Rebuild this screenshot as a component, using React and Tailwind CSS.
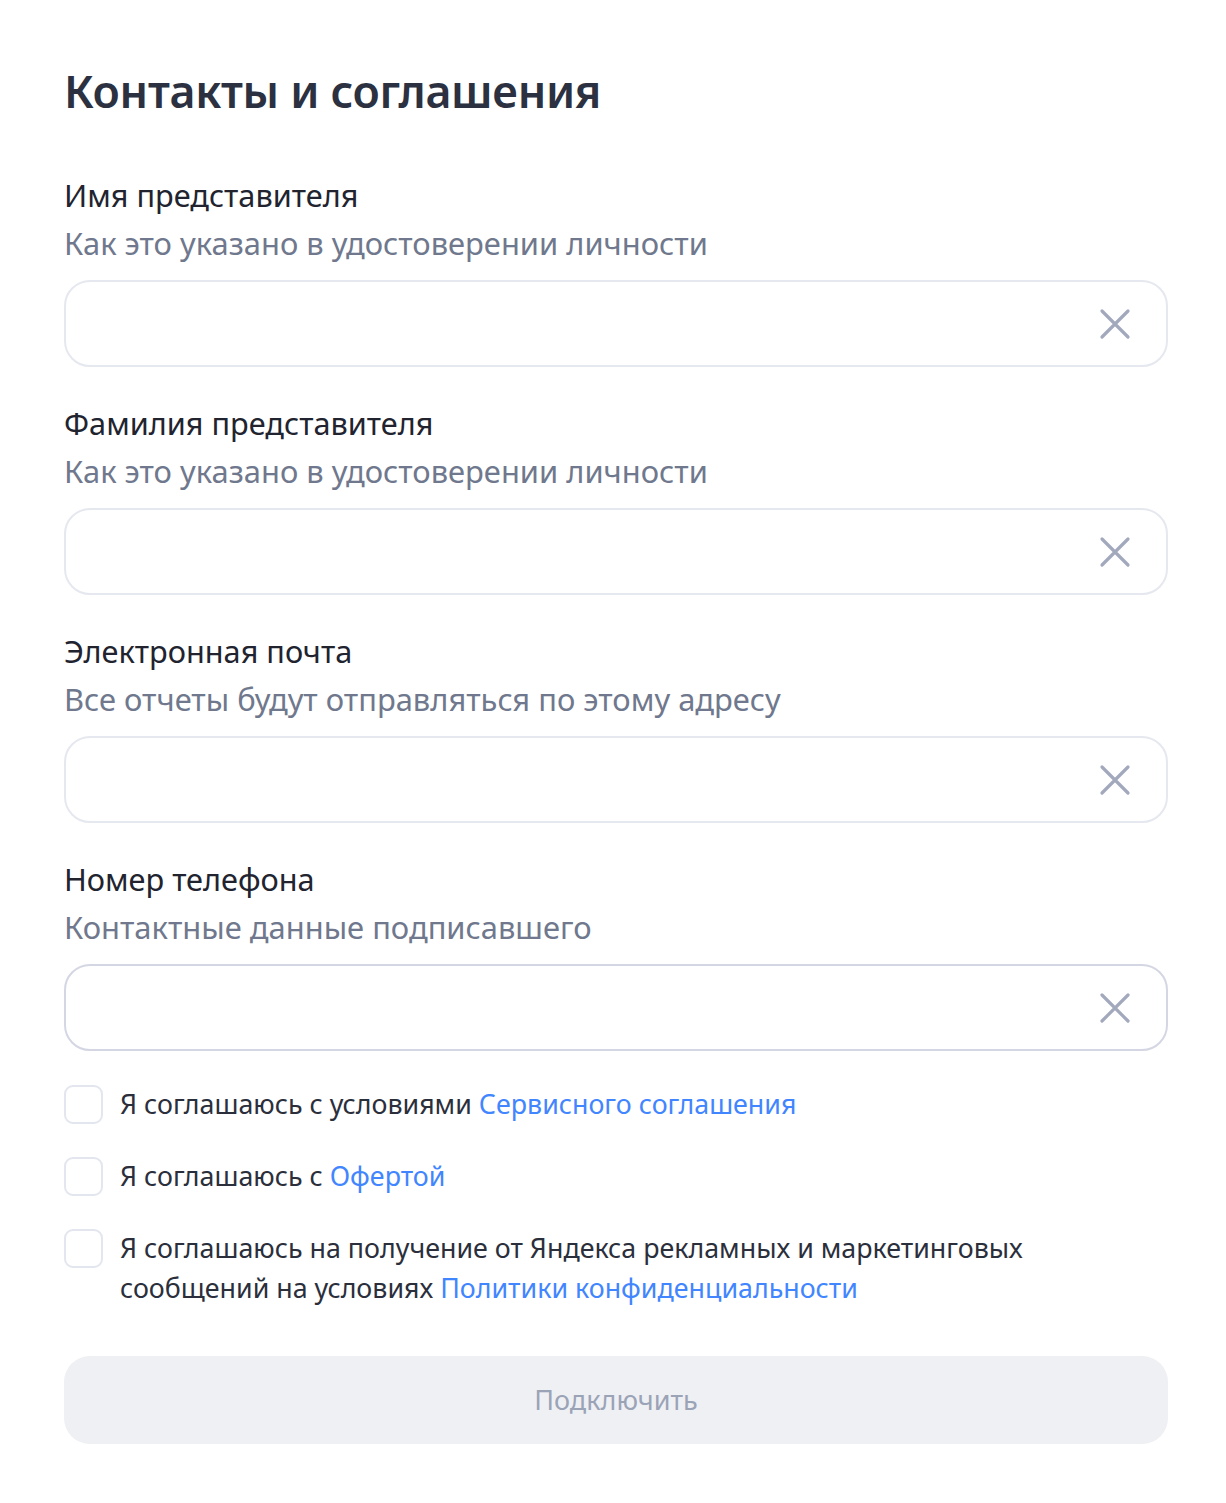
import React from "react";

function ClearIcon() {
  return (
    <svg width="34" height="34" viewBox="0 0 34 34" fill="none">
      <path d="M4 4L30 30M30 4L4 30" stroke="#a3a9bd" strokeWidth="3.2" strokeLinecap="round" />
    </svg>
  );
}

function Field({ label, hint, strong }) {
  return (
    <div className="flex flex-col">
      <div className="text-[30.7px] leading-[48px] text-[#21242f]">{label}</div>
      <div className="text-[30.9px] leading-[48px] text-[#6f788d]">{hint}</div>
      <div
        className={
          "mt-[13px] h-[87px] rounded-[26px] border-2 flex items-center justify-end pr-[34px] " +
          (strong ? "border-[#d4d7e3]" : "border-[#e6e8ef]")
        }
      >
        <ClearIcon />
      </div>
    </div>
  );
}

function Check({ children }) {
  return (
    <div className="flex items-start gap-[17px]">
      <div className="mt-[1px] w-[39px] h-[39px] shrink-0 rounded-[9px] border-2 border-[#e3e6ee] bg-white" />
      <div className="text-[26.8px] leading-[40px] text-[#2b2f3c]">{children}</div>
    </div>
  );
}

export default function App() {
  return (
    <div
      className="min-h-[1503px] bg-white"
      style={{ fontFamily: '"Noto Sans", "Open Sans", sans-serif' }}
    >
      <div className="px-[64px] pt-[63px] pb-[60px] w-[1232px]">
        <h1 className="text-[44.7px] leading-[56px] font-semibold text-[#2b3140] tracking-[-0.3px]">
          Контакты и соглашения
        </h1>
        <div className="mt-[52px] flex flex-col gap-[32px]">
          <Field label="Имя представителя" hint="Как это указано в удостоверении личности" />
          <Field label="Фамилия представителя" hint="Как это указано в удостоверении личности" />
          <Field label="Электронная почта" hint="Все отчеты будут отправляться по этому адресу" />
          <Field label="Номер телефона" hint="Контактные данные подписавшего" strong />
        </div>
        <div className="mt-[33px] flex flex-col gap-[32px]">
          <Check>
            Я соглашаюсь с условиями <span className="text-[#4185ff]">Сервисного соглашения</span>
          </Check>
          <Check>
            Я соглашаюсь с <span className="text-[#4185ff]">Офертой</span>
          </Check>
          <Check>
            Я соглашаюсь на получение от Яндекса рекламных и маркетинговых
            <br />
            сообщений на условиях <span className="text-[#4185ff]">Политики конфиденциальности</span>
          </Check>
        </div>
        <button className="mt-[48px] w-full h-[88px] rounded-[26px] bg-[#eff0f4] text-[27px] text-[#9ba3b7]">
          Подключить
        </button>
      </div>
    </div>
  );
}
